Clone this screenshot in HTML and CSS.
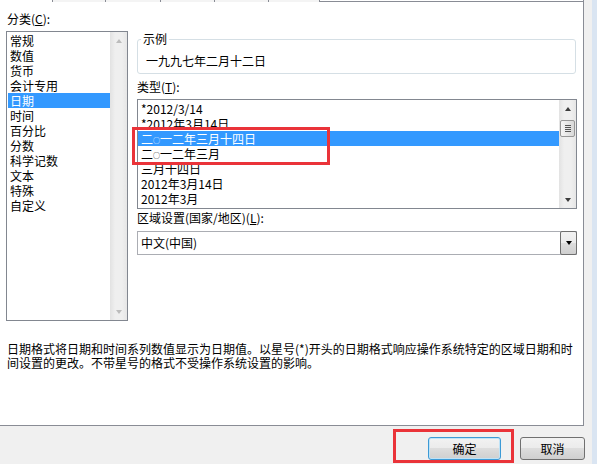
FILE: index.html
```html
<!DOCTYPE html>
<html lang="zh-CN">
<head>
    <meta charset="UTF-8">
    <title>设置单元格格式</title>
    <link rel="stylesheet" href="styles.css">
</head>
<body>
    <div class="dialog">
        <div class="tabs">
            <span class="tab-gap"></span>
            <span class="tab t1"></span>
            <span class="tab t2"></span>
            <span class="tab t3"></span>
            <span class="tab t4"></span>
            <span class="tab t5"></span>
            <span class="tab-rest"></span>
        </div>

        <div class="panel">
            <div class="columns">
                <div class="col-left">
                    <div class="label">分类(<u>C</u>):</div>
                    <div class="listbox category">
                        <ul class="items">
                            <li>常规</li>
                            <li>数值</li>
                            <li>货币</li>
                            <li>会计专用</li>
                            <li class="sel">日期</li>
                            <li>时间</li>
                            <li>百分比</li>
                            <li>分数</li>
                            <li>科学记数</li>
                            <li>文本</li>
                            <li>特殊</li>
                            <li>自定义</li>
                        </ul>
                        <div class="scrollbar off">
                            <span class="sb-btn"><span class="arrow up"></span></span>
                            <span class="sb-track"></span>
                            <span class="sb-btn"><span class="arrow down"></span></span>
                        </div>
                    </div>
                </div>

                <div class="col-right">
                    <fieldset class="sample">
                        <legend>示例</legend>
                        <div class="sample-text">一九九七年二月十二日</div>
                    </fieldset>

                    <div class="label gap-top">类型(<u>T</u>):</div>
                    <div class="listbox types">
                        <ul class="items">
                            <li>*2012/3/14</li>
                            <li>*2012年3月14日</li>
                            <li class="sel">二<span class="zero">○</span>一二年三月十四日</li>
                            <li>二<span class="zero">○</span>一二年三月</li>
                            <li>三月十四日</li>
                            <li>2012年3月14日</li>
                            <li>2012年3月</li>
                        </ul>
                        <div class="scrollbar">
                            <span class="sb-btn"><span class="arrow up"></span></span>
                            <span class="sb-track">
                                <span class="thumb">
                                    <span class="grip"></span>
                                    <span class="grip"></span>
                                    <span class="grip"></span>
                                    <span class="grip"></span>
                                </span>
                            </span>
                            <span class="sb-btn"><span class="arrow down"></span></span>
                        </div>
                    </div>

                    <div class="label locale-label">区域设置(国家/地区)(<u>L</u>):</div>
                    <div class="combo">
                        <span class="combo-text">中文(中国)</span>
                        <span class="combo-btn"><span class="arrow down"></span></span>
                    </div>
                </div>
            </div>

            <p class="desc">日期格式将日期和时间系列数值显示为日期值。以星号(*)开头的日期格式响应操作系统特定的区域日期和时<br>间设置的更改。不带星号的格式不受操作系统设置的影响。</p>
        </div>

        <div class="buttons">
            <button class="btn ok">确定</button>
            <button class="btn cancel">取消</button>
        </div>
    </div>
    <div class="edge"></div>

    <!-- red annotation boxes -->
    <div class="mark mark-types"></div>
    <div class="mark mark-ok"></div>
</body>
</html>
```

FILE: styles.css
```css
* {
    margin: 0;
    padding: 0;
    box-sizing: border-box;
}

body {
    font-family: "Noto Sans CJK SC", "Liberation Sans", sans-serif;
    font-size: 12px;
    color: #000;
    background: #f0f0f0;
    width: 597px;
    height: 464px;
    overflow: hidden;
    display: flex;
}

.dialog {
    width: 592px;
}

.edge {
    width: 5px;
    background: #dae5f2;
}

/* tab stubs at the very top */
.tabs {
    display: flex;
    height: 2px;
    width: 584px;
    background: #fff;
}

.tab-gap {
    width: 52px;
}

.tab {
    border-left: 1px solid #898c95;
    background: #f4f4f4;
}

.t1 { width: 53px; }
.t2 { width: 55px; }
.t3 { width: 54px; }
.t4 { width: 54px; }
.t5 { width: 51px; }

.tab-rest {
    flex: 1;
    border-left: 1px solid #898c95;
    border-right: 1px solid #898c95;
    border-bottom: 1px solid #898c95;
}

.panel {
    width: 584px;
    height: 424px;
    background: #fff;
    border-right: 1px solid #898c95;
    border-bottom: 1px solid #898c95;
    padding: 9px 0 0 6px;
}

.columns {
    display: flex;
}

.col-left {
    width: 122px;
}

.col-right {
    width: 440px;
    margin-left: 9px;
}

.label {
    height: 16px;
    line-height: 16px;
    padding-left: 1px;
    white-space: nowrap;
}

.label.gap-top {
    margin-top: 5px;
    padding-left: 0;
}

.label.locale-label {
    margin-top: 1px;
    padding-left: 0;
}

/* list boxes */
.listbox {
    display: flex;
    margin-top: 4px;
    border: 1px solid #828790;
    background: #fff;
}

.category {
    height: 290px;
}

.types {
    height: 110px;
}

.items {
    flex: 1;
    list-style: none;
    padding-top: 1px;
    overflow: hidden;
}

.items li {
    height: 15px;
    line-height: 15px;
    white-space: nowrap;
}

.category .items li {
    margin-left: 1px;
    padding-left: 2px;
}

.types .items li {
    padding-left: 3px;
}

.items li.sel {
    background: #3399ff;
    color: #fff;
}

.zero {
    font-size: 7px;
    vertical-align: 1px;
}

/* scroll bars */
.scrollbar {
    width: 17px;
    display: flex;
    flex-direction: column;
    background: linear-gradient(to right, #e2e2e2, #efefef 30%, #efefef 70%, #e6e6e6);
}

.sb-btn {
    height: 17px;
    display: flex;
    align-items: center;
    justify-content: center;
}

.sb-track {
    flex: 1;
    display: flex;
    flex-direction: column;
}

.thumb {
    margin: 3px 1px 0 1px;
    height: 17px;
    border: 1px solid #979797;
    border-radius: 2px;
    background: linear-gradient(to right, #f5f5f5, #e4e4e4 60%, #d8d8d8);
    display: flex;
    flex-direction: column;
    align-items: center;
    justify-content: center;
    gap: 1px;
}

.grip {
    width: 6px;
    height: 1px;
    background: #555;
}

.arrow {
    width: 0;
    height: 0;
    border-left: 3px solid transparent;
    border-right: 3px solid transparent;
}

.arrow.up {
    border-bottom: 4px solid #3c3c3c;
}

.arrow.down {
    border-top: 4px solid #3c3c3c;
}

.scrollbar.off .arrow.up {
    border-bottom-color: #bcbcbc;
}

.scrollbar.off .arrow.down {
    border-top-color: #bcbcbc;
}

/* sample group */
.sample {
    margin: 20px 1px 0 0;
    padding: 6px 8px 4px 3px;
    border: 1px solid #d5dfe5;
    border-radius: 3px;
    min-width: 0;
}

.sample legend {
    padding: 0 2px;
    line-height: 16px;
}

.sample-text {
    line-height: 16px;
    padding-left: 5px;
}

/* locale combo */
.combo {
    display: flex;
    height: 24px;
    margin-top: 5px;
    border: 1px solid #abadb3;
    background: #fff;
}

.combo-text {
    flex: 1;
    line-height: 22px;
    padding-left: 3px;
}

.combo-btn {
    width: 17px;
    margin: -1px -1px -1px 0;
    border: 1px solid #6f6f6f;
    border-radius: 2px;
    background: linear-gradient(#f2f2f2, #ebebeb 50%, #dddddd 50%, #cfcfcf);
    display: flex;
    align-items: center;
    justify-content: center;
}

.combo-btn .arrow.down {
    border-top-color: #000;
}

.desc {
    width: 574px;
    margin-top: 21px;
    padding-left: 1px;
    line-height: 14px;
}

/* dialog buttons */
.buttons {
    width: 585px;
    display: flex;
    justify-content: flex-end;
    gap: 19px;
    padding-top: 11px;
}

.btn {
    height: 23px;
    font-family: inherit;
    font-size: 12px;
    color: #000;
    border: 1px solid #707070;
    border-radius: 3px;
    background: linear-gradient(#f2f2f2, #ebebeb 49%, #dddddd 50%, #cfcfcf);
}

.btn.ok {
    width: 73px;
    border-color: #3c9ad6;
    box-shadow: inset 0 0 0 1px #bfe3f7;
}

.btn.cancel {
    width: 65px;
}

/* annotation boxes drawn over the screenshot */
.mark {
    position: absolute;
    border: 3px solid #ea3339;
}

.mark-types {
    left: 132px;
    top: 127px;
    width: 198px;
    height: 38px;
}

.mark-ok {
    left: 393px;
    top: 429px;
    width: 121px;
    height: 34px;
}
```
